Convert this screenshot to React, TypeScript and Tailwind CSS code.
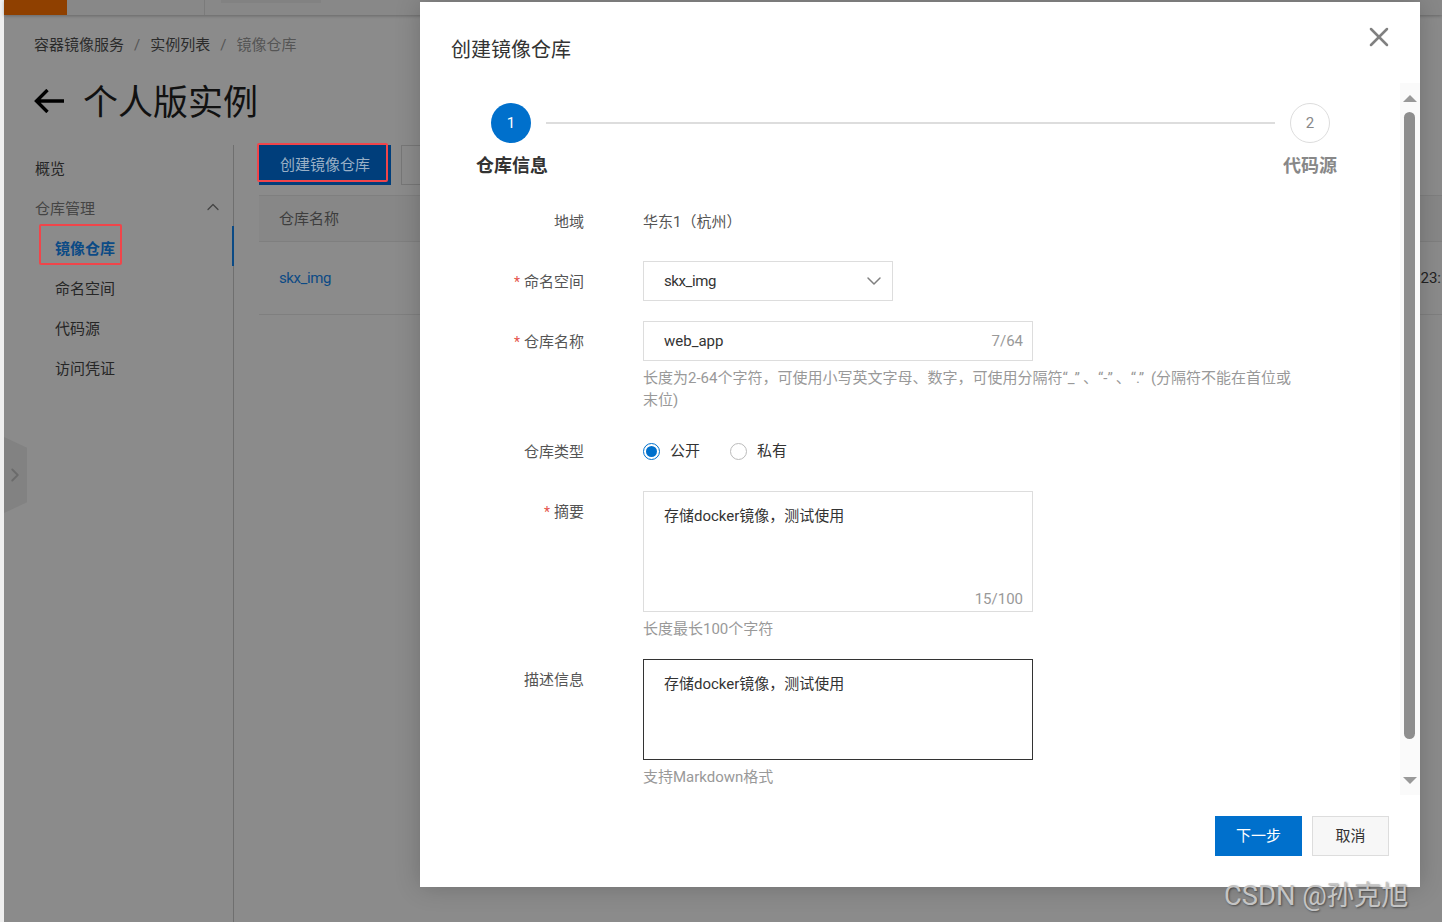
import { ChevronDown, ChevronRight, ChevronUp, X } from "lucide-react";
import type { ReactNode } from "react";

const font = "font-['Roboto','Noto_Sans_CJK_SC',sans-serif]";

function FormRow({ label, required, className, children }: { label: string; required?: boolean; className?: string; children: ReactNode }) {
  return (
    <div className={`flex ${className ?? "mb-5"}`}>
      <div className="w-[133px] h-10 pt-[2px] flex items-center justify-end text-[15px] text-[#555] shrink-0">
        {required && <span className="text-[#e5534b] mr-1 text-[14px]">*</span>}
        {label}
      </div>
      <div className="ml-[59px] flex-1">{children}</div>
    </div>
  );
}

function Hint({ children }: { children: ReactNode }) {
  return <p className="mt-[5px] translate-y-px text-[15px] leading-[22px] text-[#999]">{children}</p>;
}

function Radio({ checked, label }: { checked?: boolean; label: string }) {
  return (
    <div className="flex items-center mr-[30px]">
      {checked ? (
        <span className="w-[17px] h-[17px] rounded-full border border-[#0070cc] flex items-center justify-center">
          <span className="w-[11px] h-[11px] rounded-full bg-[#0070cc]" />
        </span>
      ) : (
        <span className="w-[17px] h-[17px] rounded-full border border-[#bbb]" />
      )}
      <span className="ml-[10px] text-[15px] text-[#333]">{label}</span>
    </div>
  );
}

function Sidebar() {
  const sub = ["命名空间", "代码源", "访问凭证"];
  return (
    <div className="w-[230px] pt-[3px] border-r border-[#6f6f6f] text-[15px] text-[#262626] relative">
      <div className="h-10 pt-[2px] flex items-center pl-[31px]">概览</div>
      <div className="h-10 pt-[2px] flex items-center justify-between pl-[31px] pr-[10px] text-[#444]">
        仓库管理
        <ChevronUp size={20} strokeWidth={1.5} className="text-[#444] -mt-[4px]" />
      </div>
      <div className="h-10 pt-[2px] flex items-center pl-[51px] font-bold text-[#0b4a85]">镜像仓库</div>
      {sub.map((s) => (
        <div key={s} className="h-10 pt-[2px] flex items-center pl-[51px]">{s}</div>
      ))}
      {/* active marker */}
      <div className="absolute -right-px top-[81px] w-[2px] h-10 bg-[#0b4a85]" />
      {/* red annotation box */}
      <div className="absolute left-[35px] top-[79px] w-[83px] h-[41px] border-2 border-[#f0454a] rounded-[2px]" />
    </div>
  );
}

function Page() {
  return (
    <div className="w-[1438px] bg-[#8b8b8b] flex flex-col">
      <div className="h-[15px] bg-[#888] shadow-[0_1px_3px_rgba(0,0,0,0.25)] flex">
        <div className="w-[63px] bg-[#8f4000]" />
        <div className="w-[138px] border-r border-[#7b7b7b]" />
        <div className="ml-4 w-[100px] h-[3px] bg-[#828282]" />
      </div>
      <div className="pl-[30px] mt-[19px] h-[22px] flex items-center text-[15px] text-[#2b2b2b]">
        容器镜像服务
        <span className="mx-[10px] text-[#555]">/</span>
        实例列表
        <span className="mx-[10px] text-[#555]">/</span>
        <span className="text-[#555]">镜像仓库</span>
      </div>
      <div className="pl-[30px] mt-[20px] h-[50px] flex items-center text-black">
        <svg width="30" height="24" viewBox="0 0 30 24" fill="none" stroke="currentColor" strokeWidth="3.4">
          <path d="M2 12H30M13.5 1 2.5 12l11 11" />
        </svg>
        <span className="ml-[19px] mt-[6px] text-[35px] leading-[50px] text-[#111]">个人版实例</span>
      </div>
      <div className="mt-[19px] flex flex-1 relative">
        <Sidebar />
        <div className="pl-[25px] flex-1">
          <div className="flex relative">
            <div className="w-[132px] h-10 bg-[#003e7b] text-[#9ab0c6] text-[15px] flex items-center pl-[21px]">创建镜像仓库</div>
            <div className="ml-[10px] w-[60px] h-10 border border-[#777]" />
            <div className="absolute -left-[2px] -top-[2px] w-[131px] h-[39px] border-2 border-[#f0454a] rounded-[2px]" />
          </div>
          <div className="mt-[10px] h-[47px] pt-[2px] bg-[#878787] border-y border-[#7f7f7f] flex items-center pl-[20px] text-[15px] text-[#3d3d3d]">仓库名称</div>
          <div className="h-[73px] pt-[1px] border-b border-[#7f7f7f] flex items-center justify-between pl-[20px] text-[15px] text-[#0b4a85]">
            <span className="tracking-[-0.4px]">skx_img</span>
            <span className="text-[#222] mr-[1px]">23:</span>
          </div>
        </div>
        <div className="absolute left-0 top-[292px] w-[23px] h-[76px] bg-[#828282] flex items-center justify-end [clip-path:polygon(0_0,100%_14%,100%_86%,0_100%)]">
          <ChevronRight size={22} strokeWidth={2} className="text-[#6b6b6b] mr-[1px]" />
        </div>
      </div>
    </div>
  );
}

function Modal() {
  return (
    <div className="absolute left-[420px] top-[2px] w-[1000px] h-[885px] bg-white shadow-[0_0_24px_rgba(0,0,0,0.2)] flex flex-col">
      <div className="h-[81px] pl-[31px] pt-[33px] pr-[31px] flex justify-between items-start">
        <span className="text-[20px] leading-[30px] text-[#333]">创建镜像仓库</span>
        <X size={32} strokeWidth={1.9} className="text-[#808080] -mt-[14px] -mr-[6px]" />
      </div>
      <div className="flex flex-1 min-h-0">
        <div className="flex-1 pl-[31px] flex flex-col">
          {/* steps */}
          <div className="ml-[25px] mr-[63px] h-[118px] pt-[20px]">
            <div className="flex items-center ml-[15px] mr-[7px]">
              <span className="w-10 h-10 rounded-full bg-[#0070cc] text-white text-[15px] flex items-center justify-center">1</span>
              <span className="flex-1 h-[2px] bg-[#ddd] mx-[15px]" />
              <span className="w-10 h-10 rounded-full border border-[#ddd] text-[#888] text-[15px] flex items-center justify-center">2</span>
            </div>
            <div className="mt-[10px] flex justify-between items-center text-[18px] leading-[26px] font-bold">
              <span className="text-[#333]">仓库信息</span>
              <span className="text-[#888]">代码源</span>
            </div>
          </div>
          <div>
            <FormRow label="地域">
              <div className="h-10 pt-[2px] flex items-center text-[15px] text-[#555]">华东1（杭州）</div>
            </FormRow>
            <FormRow label="命名空间" required>
              <div className="w-[250px] h-10 border border-[#ddd] flex items-center justify-between pl-5 pr-[6px] text-[15px] text-[#333]">
                <span className="tracking-[-0.4px]">skx_img</span>
                <ChevronDown size={24} strokeWidth={1.5} className="text-[#808080]" />
              </div>
            </FormRow>
            <FormRow label="仓库名称" required className="mb-[21px]">
              <div className="w-[390px] h-10 border border-[#ddd] flex items-center justify-between pl-5 pr-[9px] text-[15px] text-[#333]">
                web_app
                <span className="text-[#999]">7/64</span>
              </div>
              <div className="w-[655px]">
                <Hint>{"长度为2-64个字符，可使用小写英文字母、数字，可使用分隔符“_”\u2009、“-”\u2009、“.”\u2009 (分隔符不能在首位或末位)"}</Hint>
              </div>
            </FormRow>
            <FormRow label="仓库类型">
              <div className="h-10 flex items-center">
                <Radio checked label="公开" />
                <Radio label="私有" />
              </div>
            </FormRow>
            <FormRow label="摘要" required>
              <div className="w-[390px] h-[121px] border border-[#ddd] pl-5 pr-[9px] pt-[13px] flex flex-col justify-between text-[15px] leading-[22px] text-[#333]">
                <span>存储docker镜像，测试使用</span>
                <span className="self-end text-[#999] pb-[1px]">15/100</span>
              </div>
              <Hint>长度最长100个字符</Hint>
            </FormRow>
            <FormRow label="描述信息" className="">
              <div className="w-[390px] h-[101px] border border-[#333] pl-5 pt-[13px] text-[15px] leading-[22px] text-[#333]">
                <span>存储docker镜像，测试使用</span>
              </div>
              <Hint>支持Markdown格式</Hint>
            </FormRow>
          </div>
        </div>
        {/* scrollbar */}
        <div className="w-5 h-[712px] pr-px bg-[#fafafa] flex flex-col items-center">
          <span className="mt-3 w-0 h-0 border-x-[7px] border-x-transparent border-b-[7px] border-b-[#999]" />
          <span className="mt-[10px] w-[11px] h-[627px] rounded-full bg-[#8e8e8e]" />
          <span className="mt-[38px] w-0 h-0 border-x-[7px] border-x-transparent border-t-[7px] border-t-[#999]" />
        </div>
      </div>
      <div className="h-[71px] pr-[31px] flex justify-end gap-[10px] text-[15px]">
        <div className="w-[87px] h-10 bg-[#0070cc] text-white flex items-center justify-center">下一步</div>
        <div className="w-[77px] h-10 bg-[#f7f7f7] border border-[#ddd] text-[#333] flex items-center justify-center">取消</div>
      </div>
    </div>
  );
}

export default function App() {
  return (
    <div className={`relative w-[1442px] h-[922px] overflow-hidden flex bg-[#f0f0f0] ${font}`}>
      <div className="w-1 bg-[#efefef]" />
      <Page />
      <Modal />
      <div className="absolute left-[1224px] top-[878px] text-[27.3px] leading-9 text-[#c4c4c4] [text-shadow:1px_1px_2px_rgba(0,0,0,0.45)]">CSDN @孙克旭</div>
    </div>
  );
}
